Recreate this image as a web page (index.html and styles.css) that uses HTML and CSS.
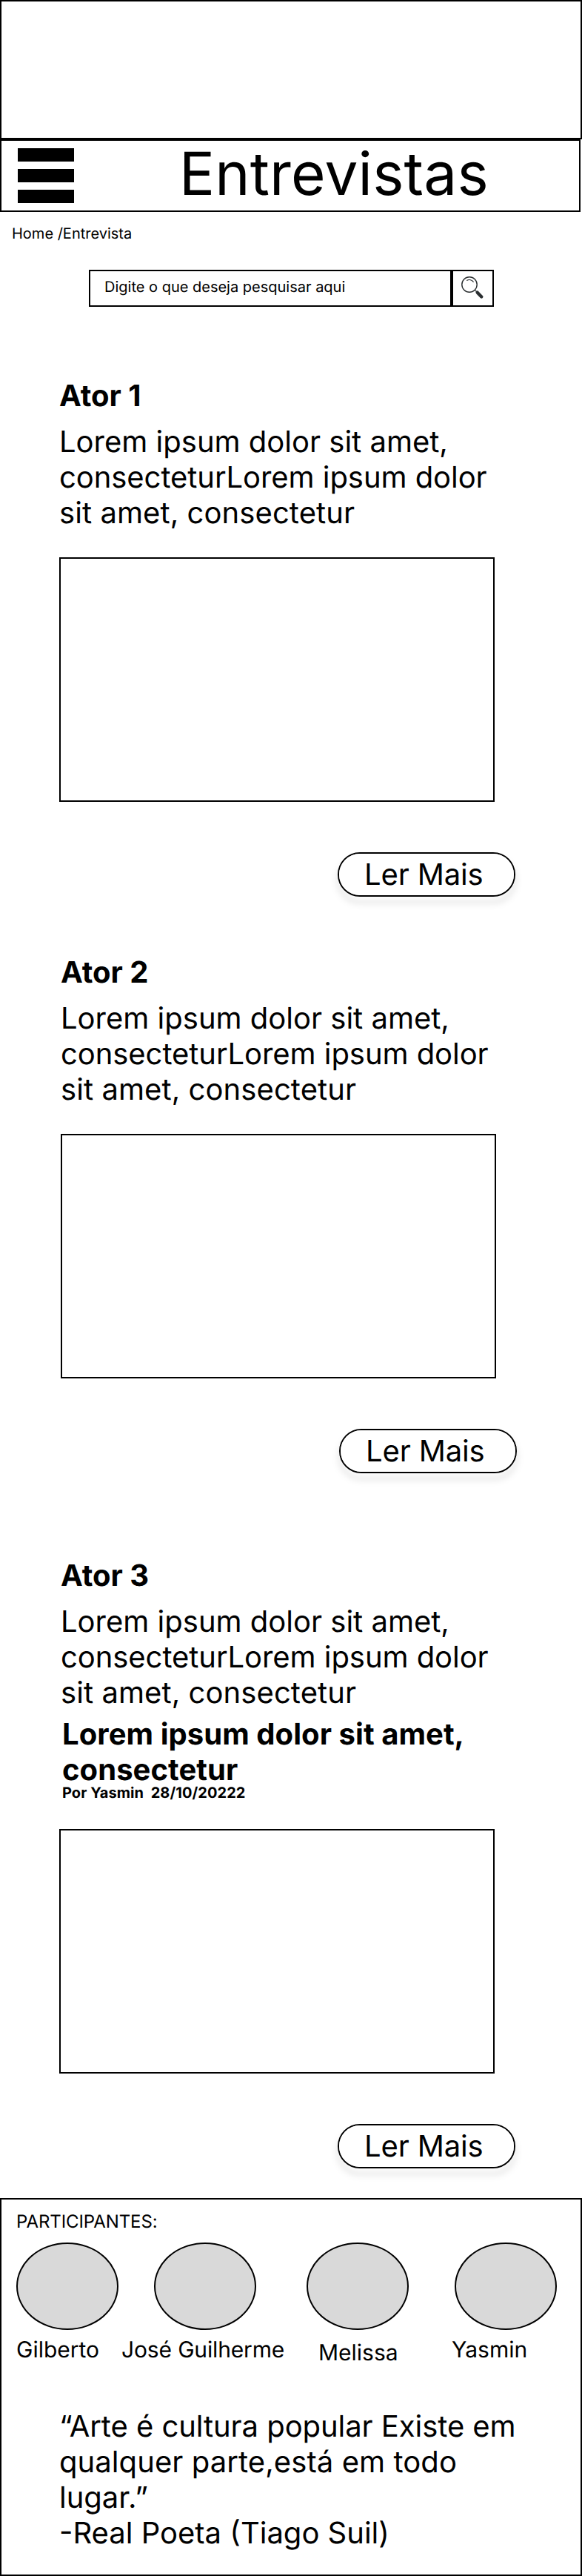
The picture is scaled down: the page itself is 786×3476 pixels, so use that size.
FILE: index.html
```html
<!DOCTYPE html>
<html lang="pt-BR">
<head>
<meta charset="utf-8">
<title>Entrevistas</title>
<link rel="stylesheet" href="styles.css">
</head>
<body>
<div class="banner"></div>
<header class="header">
  <div class="menu"><span class="menu-bar"></span><span class="menu-bar"></span><span class="menu-bar"></span></div>
  <h1 class="title">Entrevistas</h1>
</header>
<nav class="breadcrumb">Home /Entrevista</nav>
<div class="search">
  <div class="search-field">Digite o que deseja pesquisar aqui</div>
  <div class="search-button">
    <svg class="search-icon" width="32" height="32" viewBox="0 0 32 32" fill="none" stroke="#2b2f31">
      <circle cx="12" cy="12" r="10.2" stroke-width="1.4"/>
      <path d="M8.3 6.6C11.5 4.8 15.3 5.6 17.6 8.6" stroke-width="1.2"/>
      <path d="M19.2 19.2L21.5 21.5" stroke-width="1.2"/>
      <path d="M22.7 22.7L28.3 28.5" stroke-width="4.4" stroke-linecap="round"/>
    </svg>
  </div>
</div>
<main>
  <article class="item">
    <h2 class="name">Ator 1</h2>
    <p class="text">Lorem ipsum dolor sit amet,<br><span class="tight">consecteturLorem ipsum dolor</span><br><span class="loose">sit amet, consectetur</span></p>
    <div class="photo"></div>
    <div class="more">Ler Mais</div>
  </article>
  <article class="item item-second">
    <h2 class="name">Ator 2</h2>
    <p class="text">Lorem ipsum dolor sit amet,<br><span class="tight">consecteturLorem ipsum dolor</span><br><span class="loose">sit amet, consectetur</span></p>
    <div class="photo"></div>
    <div class="more">Ler Mais</div>
  </article>
  <article class="item item-third">
    <div class="intro">
      <h2 class="name">Ator 3</h2>
      <p class="text">Lorem ipsum dolor sit amet,<br><span class="tight">consecteturLorem ipsum dolor</span><br><span class="loose">sit amet, consectetur</span></p>
      <h3 class="headline">Lorem ipsum dolor sit amet,<br>consectetur</h3>
      <p class="byline">Por Yasmin&nbsp; 28/10/20222</p>
    </div>
    <div class="photo"></div>
    <div class="more">Ler Mais</div>
  </article>
</main>
<footer class="footer">
  <div class="label">PARTICIPANTES:</div>
  <div class="people">
    <div class="person"><div class="avatar"></div><span>Gilberto</span></div>
    <div class="person person-jose"><div class="avatar"></div><span>José Guilherme</span></div>
    <div class="person person-melissa"><div class="avatar"></div><span>Melissa</span></div>
    <div class="person person-yasmin"><div class="avatar"></div><span>Yasmin</span></div>
  </div>
  <p class="quote"><span class="tight">“Arte é cultura popular Existe em</span><br><span class="loose">qualquer parte,está em todo</span><br>lugar.”<br>-Real Poeta (Tiago Suil)</p>
</footer>
</body>
</html>
```
FILE: styles.css
```css
* { box-sizing: border-box; margin: 0; padding: 0; }
body { width: 786px; background: #fff; color: #000; font-family: Inter, sans-serif; font-size: 40px; line-height: 48px; text-rendering: geometricPrecision; }
.banner { height: 188px; border: 2px solid #000; }
.header { display: flex; width: 784px; height: 98px; border: 2px solid #000; padding-left: 22px; }
.menu { display: flex; flex-direction: column; gap: 10px; padding-top: 10px; width: 218px; }
.menu-bar { width: 76px; height: 18px; background: #000; }
.title { font-size: 80px; font-weight: 400; line-height: 97px; letter-spacing: 0.2px; margin-top: -4px; white-space: nowrap; }
.breadcrumb { font-size: 20px; line-height: 24px; padding: 17px 0 0 16px; }
.search { display: flex; width: 547px; height: 50px; margin: 37px 0 0 120px; font-size: 20px; line-height: 24px; }
.search-field { width: 490px; border: 2px solid #000; padding: 9px 0 0 19px; }
.search-button { width: 57px; border: 2px solid #000; padding: 6px 0 0 10px; }
.search-icon { display: block; }
.item { width: 616px; margin-left: 80px; margin-top: 96px; }
.item-second { margin-left: 82px; margin-top: 78px; }
.item-third { margin-top: 114px; }
.intro { padding-left: 2px; }
.name { font-size: 40px; font-weight: 700; line-height: 48px; }
.text { margin-top: 14px; white-space: nowrap; }
.tight { letter-spacing: -0.06px; }
.loose { letter-spacing: 0.08px; }
.headline { font-size: 40px; font-weight: 700; line-height: 48px; letter-spacing: 0.06px; margin: 8px 0 0 2px; }
.byline { font-size: 20px; font-weight: 700; line-height: 24px; letter-spacing: 0.06px; margin: -5px 0 0 2px; }
.photo { width: 588px; height: 330px; border: 2px solid #000; margin-top: 36px; }
.item-third .photo { margin-top: 37px; }
.more { position: relative; width: 240px; height: 60px; border-radius: 30px; margin: 68px 0 0 376px; padding: 6px 0 0 36px; letter-spacing: -0.15px; }
.more::before { content: ""; position: absolute; z-index: -2; inset: 0; border: 2px solid #000; border-radius: 30px; filter: drop-shadow(0 8px 4px rgba(0, 0, 0, 0.25)); }
.more::after { content: ""; position: absolute; z-index: -1; inset: 2px; border-radius: 28px; background: #fff; }
.footer { height: 510px; margin-top: 40px; border: 2px solid #000; padding-left: 20px; }
.label { font-size: 24px; line-height: 29px; letter-spacing: -0.1px; padding-top: 15px; }
.people { display: grid; grid-template-columns: 141px 251px 196px 150px; margin-top: 14px; font-size: 30px; line-height: 36px; white-space: nowrap; }
.person { display: flex; flex-direction: column; gap: 9px; }
.avatar { width: 138px; height: 118px; border: 2px solid #000; border-radius: 50%; background: #d9d9d9; }
.person-jose .avatar { margin-left: 45px; }
.person-jose span { margin-left: 1px; letter-spacing: -0.15px; }
.person-melissa { gap: 13px; }
.person-melissa span { margin-left: 16px; }
.person-yasmin .avatar { margin-left: 4px; }
.quote { margin: 57px 0 0 58px; white-space: nowrap; }
```
